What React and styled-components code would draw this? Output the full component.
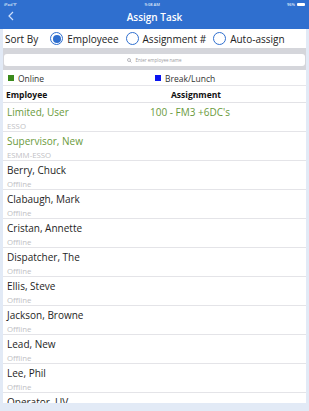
import React from "react";
import styled, { createGlobalStyle } from "styled-components";

const Global = createGlobalStyle`
  html, body { margin: 0; padding: 0; }
  body {
    background: #e2eaf6;
    font-family: "Open Sans", "DejaVu Sans", sans-serif;
  }
`;

const Screen = styled.div`
  width: 309px;
  height: 411px;
  overflow: hidden;
  background: #e2eaf6;
  display: flex;
  flex-direction: column;
`;

const Header = styled.div`
  background: #2f6fcf;
  color: #fff;
  height: 29px;
  flex-shrink: 0;
  display: flex;
  flex-direction: column;
`;

const StatusBar = styled.div`
  height: 8px;
  display: flex;
  justify-content: space-between;
  align-items: center;
  padding: 0 4px;
  font-size: 4px;
  font-weight: 600;
  color: #dfe8f8;
`;

const Battery = styled.span`
  display: inline-flex;
  align-items: center;
  gap: 2px;
  &::after {
    content: "";
    width: 8px;
    height: 3px;
    background: #fff;
    border-radius: 1px;
  }
`;

const TitleRow = styled.div`
  flex: 1;
  display: flex;
  align-items: center;
  justify-content: center;
  position: relative;
  font-size: 10px;
  font-weight: 600;
  padding-bottom: 4px;
`;

const Back = styled.span`
  position: absolute;
  left: 8px;
  top: 3px;
  display: flex;
`;

const Panel = styled.div`
  margin: 0 3px;
  background: #fff;
  height: 374px;
  flex-shrink: 0;
  overflow: hidden;
`;

const SortRow = styled.div`
  height: 19px;
  display: flex;
  align-items: center;
  padding: 0 2px;
  font-size: 10px;
  color: #222;
`;

const SortLabel = styled.span`
  margin-right: 12px;
  font-weight: 500;
`;

const Option = styled.label`
  display: flex;
  align-items: center;
  gap: 4px;
  margin-right: 7px;
  font-weight: 500;
`;

const Radio = styled.span`
  width: 13px;
  height: 13px;
  box-sizing: border-box;
  border-radius: 50%;
  border: 1.3px solid #2f6fcf;
  display: flex;
  align-items: center;
  justify-content: center;
  &::after {
    content: "";
    width: 8px;
    height: 8px;
    border-radius: 50%;
    background: ${(p) => (p.$on ? "#2f6fcf" : "transparent")};
  }
`;

const SearchWrap = styled.div`
  background: #d5d6db;
  height: 22px;
  padding: 6px 4px 4px;
  box-sizing: border-box;
  margin: 0 -3px;
  display: flex;
`;

const SearchBox = styled.div`
  flex: 1;
  background: #fff;
  border-radius: 3px;
  display: flex;
  align-items: center;
  justify-content: center;
  gap: 3px;
  font-size: 4.5px;
  color: #9a9aa0;
`;

const Legend = styled.div`
  height: 16px;
  display: flex;
  align-items: center;
  padding: 1px 5px 0;
  box-sizing: border-box;
  font-size: 8.5px;
  color: #333;
  border-bottom: 1px solid #e6e6ea;
`;

const LegendItem = styled.span`
  display: flex;
  align-items: center;
  gap: 4px;
  width: ${(p) => p.$w || "auto"};
`;

const Swatch = styled.span`
  width: 6px;
  height: 6px;
  background: ${(p) => p.$color};
`;

const TableHead = styled.div`
  height: 17px;
  box-sizing: border-box;
  display: flex;
  align-items: center;
  padding: 0 3px;
  font-size: 8.5px;
  font-weight: 700;
  color: #111;
  border-bottom: 1px solid #e2e2e6;
`;

const Col = styled.span`
  width: ${(p) => p.$w};
`;

const Row = styled.div`
  height: 29px;
  box-sizing: border-box;
  padding: 1px 4px 0;
  display: flex;
  flex-direction: column;
  border-bottom: 1px solid #e4e4e8;
`;

const Line = styled.div`
  display: flex;
  height: 16px;
  align-items: center;
  font-size: 10px;
  color: ${(p) => (p.$green ? "#6a9a3c" : "#1e1e1e")};
`;

const Sub = styled.div`
  font-size: 7.8px;
  color: #c0c0c4;
  height: 11px;
  display: flex;
  align-items: center;
`;

const rows = [
  { name: "Limited, User", sub: "ESSO", green: true, task: "100 - FM3 +6DC's" },
  { name: "Supervisor, New", sub: "ESMM-ESSO", green: true },
  { name: "Berry, Chuck", sub: "Offline" },
  { name: "Clabaugh, Mark", sub: "Offline" },
  { name: "Cristan, Annette", sub: "Offline" },
  { name: "Dispatcher, The", sub: "Offline" },
  { name: "Ellis, Steve", sub: "Offline" },
  { name: "Jackson, Browne", sub: "Offline" },
  { name: "Lead, New", sub: "Offline" },
  { name: "Lee, Phil", sub: "Offline" },
  { name: "Operator, UV", sub: "Offline" },
];

export default function App() {
  return (
    <Screen>
      <Global />
      <Header>
        <StatusBar>
          <span>iPad ᯤ</span>
          <span>9:08 AM</span>
          <Battery>96%</Battery>
        </StatusBar>
        <TitleRow>
          <Back>
            <svg width="6" height="10" viewBox="0 0 6 10">
              <path d="M5 1 L1 5 L5 9" fill="none" stroke="#cfe0fb" strokeWidth="1.2" />
            </svg>
          </Back>
          Assign Task
        </TitleRow>
      </Header>
      <Panel>
        <SortRow>
          <SortLabel>Sort By</SortLabel>
          <Option><Radio $on />Employeee</Option>
          <Option><Radio />Assignment #</Option>
          <Option><Radio />Auto-assign</Option>
        </SortRow>
        <SearchWrap>
          <SearchBox>
            <svg width="5" height="5" viewBox="0 0 10 10">
              <circle cx="4" cy="4" r="3" fill="none" stroke="#9a9aa0" strokeWidth="1.4" />
              <path d="M6.2 6.2 L9 9" stroke="#9a9aa0" strokeWidth="1.4" />
            </svg>
            Enter employee name
          </SearchBox>
        </SearchWrap>
        <Legend>
          <LegendItem $w="147px"><Swatch $color="#3b8a1c" />Online</LegendItem>
          <LegendItem><Swatch $color="#0a14f0" />Break/Lunch</LegendItem>
        </Legend>
        <TableHead>
          <Col $w="165px">Employee</Col>
          <Col>Assignment</Col>
        </TableHead>
        {rows.map((r) => (
          <Row key={r.name}>
            <Line $green={r.green}>
              <Col $w="143px">{r.name}</Col>
              {r.task && <Col>{r.task}</Col>}
            </Line>
            <Sub>{r.sub}</Sub>
          </Row>
        ))}
      </Panel>
    </Screen>
  );
}
